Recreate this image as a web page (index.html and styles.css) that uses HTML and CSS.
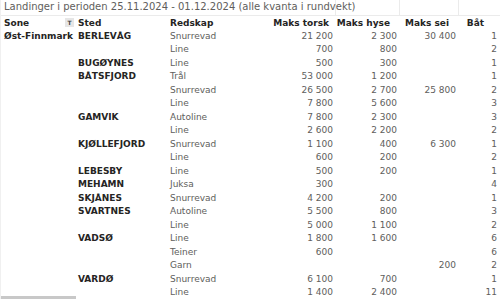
FILE: index.html
```html
<!DOCTYPE html>
<html>
<head>
<meta charset="utf-8">
<link rel="stylesheet" href="styles.css">
</head>
<body>
<div class="visual">
  <table class="grid">
    <colgroup>
      <col class="c1"><col class="c2"><col class="c3"><col class="c4"><col class="c5"><col class="c6"><col class="c7">
    </colgroup>
    <thead>
      <tr class="title">
        <th colspan="4" class="ttl">Landinger i perioden 25.11.2024 - 01.12.2024 (alle kvanta i rundvekt)</th>
        <th class="tcell"></th><th class="tcell"></th><th class="tcell"></th>
      </tr>
      <tr class="head">
        <th class="l"><span class="hwrap">Sone<span class="filt">T</span></span></th>
        <th class="l">Sted</th>
        <th class="l">Redskap</th>
        <th class="r h4">Maks torsk</th>
        <th class="r h5">Maks hyse</th>
        <th class="r h6">Maks sei</th>
        <th class="r h7">Båt</th>
      </tr>
    </thead>
    <tbody>
      <tr><td class="sone">Øst-Finnmark</td><td class="sted">BERLEVÅG</td><td>Snurrevad</td><td class="n">21 200</td><td class="n">2 300</td><td class="n">30 400</td><td class="b">1</td></tr>
      <tr><td></td><td></td><td>Line</td><td class="n">700</td><td class="n">800</td><td class="n"></td><td class="b">2</td></tr>
      <tr><td></td><td class="sted">BUGØYNES</td><td>Line</td><td class="n">500</td><td class="n">300</td><td class="n"></td><td class="b">1</td></tr>
      <tr><td></td><td class="sted">BÅTSFJORD</td><td>Trål</td><td class="n">53 000</td><td class="n">1 200</td><td class="n"></td><td class="b">1</td></tr>
      <tr><td></td><td></td><td>Snurrevad</td><td class="n">26 500</td><td class="n">2 700</td><td class="n">25 800</td><td class="b">2</td></tr>
      <tr><td></td><td></td><td>Line</td><td class="n">7 800</td><td class="n">5 600</td><td class="n"></td><td class="b">3</td></tr>
      <tr><td></td><td class="sted">GAMVIK</td><td>Autoline</td><td class="n">7 800</td><td class="n">2 300</td><td class="n"></td><td class="b">3</td></tr>
      <tr><td></td><td></td><td>Line</td><td class="n">2 600</td><td class="n">2 200</td><td class="n"></td><td class="b">2</td></tr>
      <tr><td></td><td class="sted">KJØLLEFJORD</td><td>Snurrevad</td><td class="n">1 100</td><td class="n">400</td><td class="n">6 300</td><td class="b">1</td></tr>
      <tr><td></td><td></td><td>Line</td><td class="n">600</td><td class="n">200</td><td class="n"></td><td class="b">2</td></tr>
      <tr><td></td><td class="sted">LEBESBY</td><td>Line</td><td class="n">500</td><td class="n">200</td><td class="n"></td><td class="b">1</td></tr>
      <tr><td></td><td class="sted">MEHAMN</td><td>Juksa</td><td class="n">300</td><td class="n"></td><td class="n"></td><td class="b">4</td></tr>
      <tr><td></td><td class="sted">SKJÅNES</td><td>Snurrevad</td><td class="n">4 200</td><td class="n">200</td><td class="n"></td><td class="b">1</td></tr>
      <tr><td></td><td class="sted">SVARTNES</td><td>Autoline</td><td class="n">5 500</td><td class="n">800</td><td class="n"></td><td class="b">3</td></tr>
      <tr><td></td><td></td><td>Line</td><td class="n">5 000</td><td class="n">1 100</td><td class="n"></td><td class="b">2</td></tr>
      <tr><td></td><td class="sted">VADSØ</td><td>Line</td><td class="n">1 800</td><td class="n">1 600</td><td class="n"></td><td class="b">6</td></tr>
      <tr><td></td><td></td><td>Teiner</td><td class="n">600</td><td class="n"></td><td class="n"></td><td class="b">6</td></tr>
      <tr><td></td><td></td><td>Garn</td><td class="n"></td><td class="n"></td><td class="n">200</td><td class="b">2</td></tr>
      <tr><td></td><td class="sted">VARDØ</td><td>Snurrevad</td><td class="n">6 100</td><td class="n">700</td><td class="n"></td><td class="b">1</td></tr>
      <tr><td></td><td></td><td>Line</td><td class="n">1 400</td><td class="n">2 400</td><td class="n"></td><td class="b">11</td></tr>
    </tbody>
  </table>
  <div class="scrollbar"></div>
</div>
</body>
</html>
```
FILE: styles.css
```css
html, body {
  margin: 0;
  padding: 0;
  background: #ffffff;
}
body {
  font-family: "DejaVu Sans", "Noto Sans", sans-serif;
  font-size: 9px;
  color: #605e5c;
  overflow: hidden;
}
.visual {
  position: relative;
  width: 500px;
  height: 299px;
  overflow: hidden;
  border-left: 1px solid #f0f0f0;
  box-sizing: border-box;
}
.grid {
  border-collapse: collapse;
  table-layout: fixed;
  width: 499px;
}
.c1 { width: 74px; }
.c2 { width: 92px; }
.c3 { width: 101px; }
.c4 { width: 67px; }
.c5 { width: 64px; }
.c6 { width: 59px; }
.c7 { width: 42px; }
th, td {
  padding: 0;
  white-space: nowrap;
  overflow: visible;
  box-sizing: border-box;
}
.title th {
  height: 15px;
  line-height: 14px;
  font-weight: normal;
  text-align: left;
  border-bottom: 1px solid #ebebeb;
  vertical-align: middle;
}
.ttl {
  font-size: 10px;
  padding-left: 3px;
  color: #605e5c;
}
.tcell {
  border-left: 1px solid #ebebeb;
}
.head th {
  height: 14px;
  line-height: 14px;
  font-weight: bold;
  color: #252423;
  vertical-align: middle;
}
.head .l { text-align: left; padding-left: 3px; }
.head .r { text-align: right; }
.head .h4 { padding-right: 6px; }
.head .h5 { padding-right: 9px; }
.head .h6 { padding-right: 9px; }
.head .h7 { padding-right: 16px; }
.hwrap {
  display: flex;
  align-items: center;
  justify-content: space-between;
}
.filt {
  display: inline-block;
  width: 9px;
  height: 9px;
  font-size: 6px;
  line-height: 9px;
  text-align: center;
  background: #e6e6e6;
  color: #444;
  font-weight: bold;
  margin-right: 1px;
}
tbody td {
  height: 13.5px;
  line-height: 13.5px;
  padding-left: 3px;
  vertical-align: middle;
}
td.sone, td.sted {
  font-weight: bold;
  color: #252423;
}
td.n {
  text-align: right;
  padding-right: 2px;
}
td.b {
  text-align: right;
  padding-right: 3px;
}
.scrollbar {
  position: absolute;
  left: 0;
  bottom: 0;
  width: 75px;
  height: 3px;
  background: #c8c8c8;
}
```
